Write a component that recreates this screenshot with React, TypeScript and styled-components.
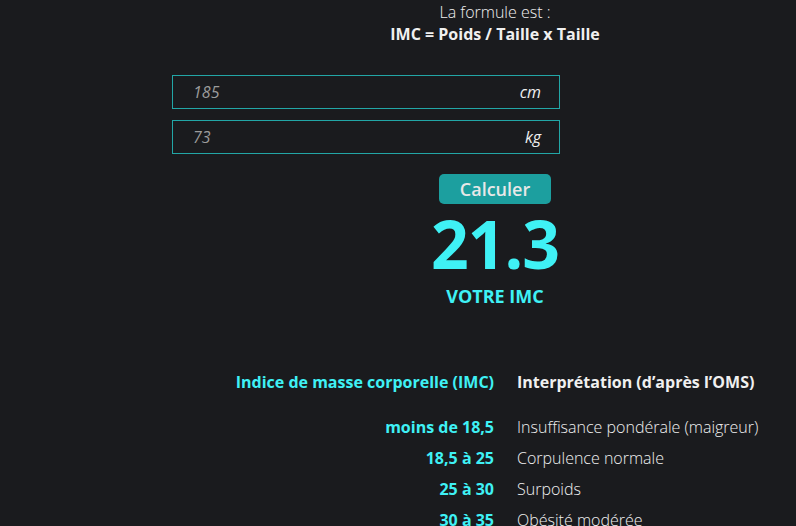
import React, { useState } from "react";
import styled, { createGlobalStyle } from "styled-components";

const GlobalStyle = createGlobalStyle`
    html, body {
        margin: 0;
        padding: 0;
        background: #1a1b1e;
        overflow: hidden;
    }
    body {
        font-family: "Open Sans", "Noto Sans", sans-serif;
        color: #ececec;
    }
`;

const Page = styled.div`
    display: flex;
    flex-direction: column;
    width: 796px;
    height: 526px;
    padding-top: 1px;
    box-sizing: border-box;
    overflow: hidden;
`;

const Centered = styled.div`
    display: flex;
    flex-direction: column;
    align-items: center;
    margin-left: 194px;
    width: 602px;
    text-align: center;
`;

const FormulaLine = styled.div<{ strong?: boolean }>`
    font-size: 16px;
    line-height: 22px;
    font-weight: ${({ strong }) => (strong ? 700 : 300)};
    color: #f0f0f0;
`;

const Form = styled.div`
    display: flex;
    flex-direction: column;
    gap: 11px;
    margin: 30px 0 0 172px;
    width: 388px;
`;

const Field = styled.label`
    display: flex;
    align-items: center;
    height: 34px;
    box-sizing: border-box;
    border: 1px solid #22a6a6;
    padding: 0 18px 0 20px;
`;

const Input = styled.input`
    flex: 1;
    min-width: 0;
    background: transparent;
    border: none;
    outline: none;
    padding: 0;
    font-family: inherit;
    font-size: 16px;
    font-style: italic;
    color: #ececec;

    &::placeholder {
        color: #9c9c9c;
        opacity: 1;
    }
`;

const Unit = styled.span`
    font-size: 16px;
    font-style: italic;
    color: #f0f0f0;
`;

const Button = styled.button`
    margin-top: 20px;
    width: 112px;
    height: 30px;
    border: none;
    border-radius: 5px;
    background: #1c9f9f;
    color: #e8e8e8;
    font-family: inherit;
    font-size: 18px;
    font-weight: 600;
    padding: 0 0 1px;
    cursor: pointer;
`;

const Score = styled.div`
    margin-top: 6px;
    font-size: 66px;
    line-height: 66px;
    font-weight: 700;
    color: #3ff1f5;
    letter-spacing: -1px;
`;

const ScoreLabel = styled.div`
    margin-top: 8px;
    font-size: 18px;
    line-height: 24px;
    font-weight: 700;
    color: #3ff1f5;
`;

const Table = styled.div`
    display: grid;
    grid-template-columns: 494px 1fr;
    column-gap: 23px;
    margin-top: 63px;
`;

const HeadCell = styled.div<{ accent?: boolean }>`
    font-size: 16px;
    line-height: 22px;
    font-weight: 700;
    color: ${({ accent }) => (accent ? "#3ff1f5" : "#f0f0f0")};
    text-align: ${({ accent }) => (accent ? "right" : "left")};
    margin-bottom: 19px;
    white-space: nowrap;
`;

const Range = styled.div`
    font-size: 16px;
    line-height: 31px;
    font-weight: 700;
    color: #3ff1f5;
    text-align: right;
    white-space: nowrap;
`;

const Meaning = styled.div`
    font-size: 16px;
    line-height: 31px;
    font-weight: 300;
    color: #f0f0f0;
    white-space: nowrap;
`;

const rows = [
    { range: "moins de 18,5", label: "Insuffisance pondérale (maigreur)" },
    { range: "18,5 à 25", label: "Corpulence normale" },
    { range: "25 à 30", label: "Surpoids" },
    { range: "30 à 35", label: "Obésité modérée" },
];

export default function App() {
    const [height, setHeight] = useState("");
    const [weight, setWeight] = useState("");

    return (
        <>
            <GlobalStyle />
            <Page>
                <Centered>
                    <FormulaLine>La formule est :</FormulaLine>
                    <FormulaLine strong>IMC = Poids / Taille x Taille</FormulaLine>
                </Centered>
                <Form>
                    <Field>
                        <Input
                            placeholder="185"
                            value={height}
                            onChange={(e) => setHeight(e.target.value)}
                        />
                        <Unit>cm</Unit>
                    </Field>
                    <Field>
                        <Input
                            placeholder="73"
                            value={weight}
                            onChange={(e) => setWeight(e.target.value)}
                        />
                        <Unit>kg</Unit>
                    </Field>
                </Form>
                <Centered>
                    <Button>Calculer</Button>
                    <Score>21.3</Score>
                    <ScoreLabel>VOTRE IMC</ScoreLabel>
                </Centered>
                <Table>
                    <HeadCell accent>Indice de masse corporelle (IMC)</HeadCell>
                    <HeadCell>Interprétation (d’après l’OMS)</HeadCell>
                    {rows.map((r) => (
                        <React.Fragment key={r.range}>
                            <Range>{r.range}</Range>
                            <Meaning>{r.label}</Meaning>
                        </React.Fragment>
                    ))}
                </Table>
            </Page>
        </>
    );
}
